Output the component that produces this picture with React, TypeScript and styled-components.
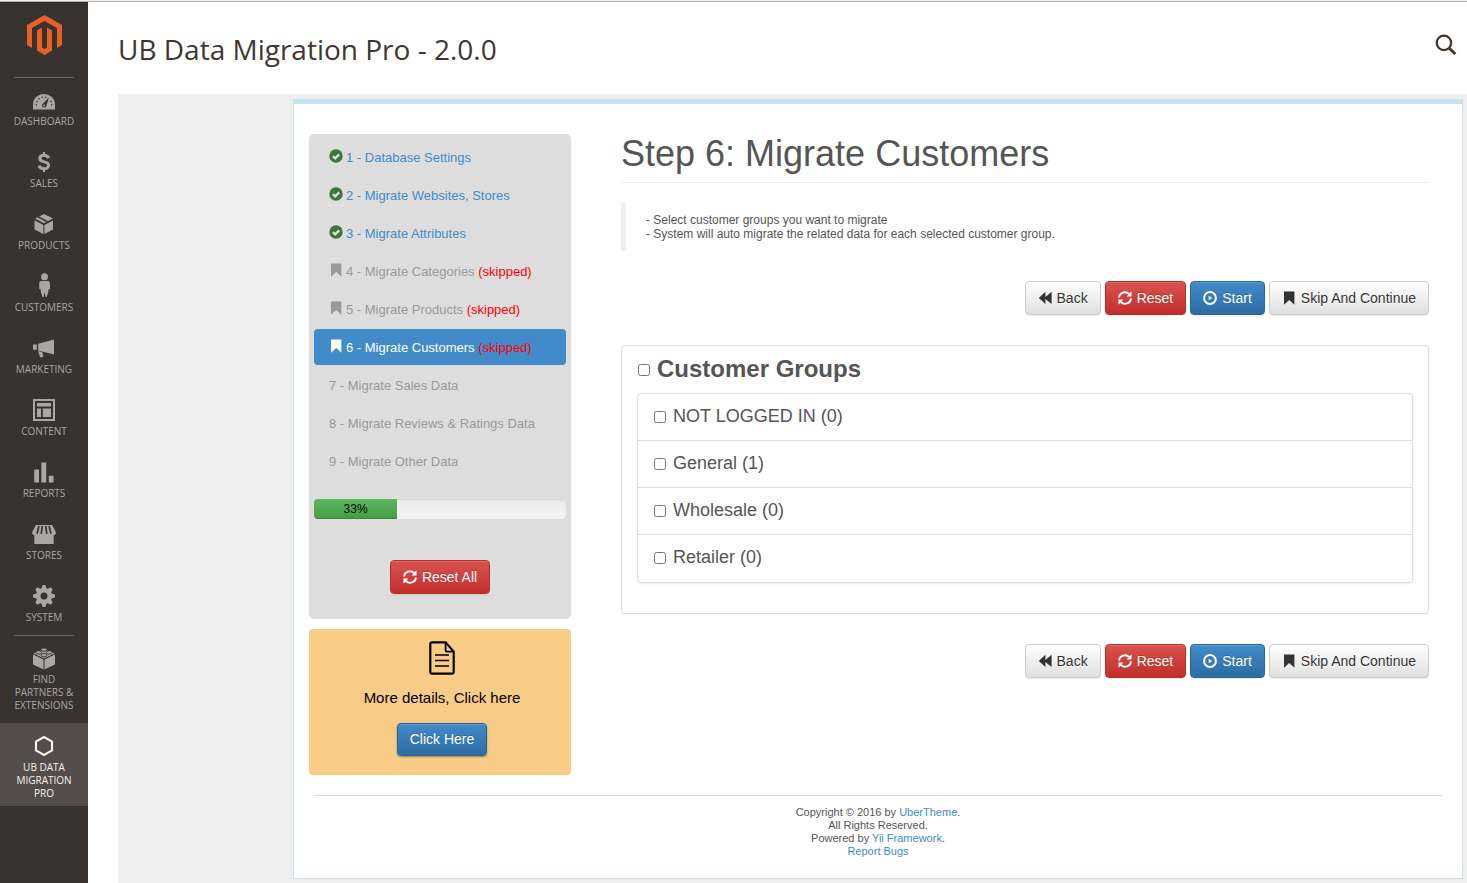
import React from "react";
import styled, { createGlobalStyle, css } from "styled-components";

const GlobalStyle = createGlobalStyle`
  *, *::before, *::after { box-sizing: border-box; }
  body {
    margin: 0;
    background: #fff;
    color: #555;
    font-family: "Liberation Sans", Arial, sans-serif;
    font-size: 14px;
    line-height: 20px;
  }
  h1, h2, h3, p, ul, ol { margin: 0; padding: 0; }
  ul, ol { list-style: none; }
  a { color: #428bca; text-decoration: none; }
  svg { display: block; flex: none; }
`;

/* ---------- Page shell ---------- */

const Page = styled.div`
  display: flex;
  flex-direction: column;
  min-height: 100vh;
`;

const TopEdge = styled.div`
  height: 2px;
  background: #f2f1ee;
  border-bottom: 1px solid #b3b2ab;
`;

const Shell = styled.div`
  display: flex;
  flex: 1;
`;

const SideNav = styled.nav`
  flex: none;
  width: 88px;
  background: #373330;
  font-family: "Open Sans", "Noto Sans", sans-serif;
`;

const LogoLink = styled.a`
  display: flex;
  justify-content: center;
  height: 75px;
  padding-top: 13px;
`;

const NavItem = styled.li<{ $divided?: boolean; $active?: boolean }>`
  display: flex;
  flex-direction: column;
  align-items: center;
  background: ${(p) => (p.$active ? "#524d49" : "transparent")};
  &::before {
    content: "";
    width: 60px;
    height: 1px;
    background: ${(p) => (p.$divided ? "#736963" : "transparent")};
  }
`;

const NavLink = styled.a<{ $active?: boolean }>`
  display: flex;
  flex-direction: column;
  align-items: center;
  gap: 4px;
  width: 100%;
  padding: 11px 10px ${(p) => (p.$active ? "6px" : "11px")};
  color: ${(p) => (p.$active ? "#f7f3eb" : "#aaa6a0")};
  font-size: 10px;
  line-height: 13px;
  text-align: center;
  text-transform: uppercase;
`;

const Main = styled.main`
  display: flex;
  flex: 1;
  flex-direction: column;
  min-width: 0;
  padding-left: 30px;
`;

const Header = styled.header`
  display: flex;
  align-items: center;
  justify-content: space-between;
  height: 92px;
  padding: 0 10px 0 0;
`;

const PageTitle = styled.h1`
  padding-top: 2px;
  color: #41362f;
  font-family: "Open Sans", "Noto Sans", sans-serif;
  font-size: 28px;
  font-weight: 400;
  line-height: 36px;
`;

const SearchButton = styled.button`
  padding: 0;
  margin-bottom: 6px;
  border: 0;
  background: none;
  color: #41362f;
`;

const Frame = styled.div`
  flex: 1;
  padding: 5px 4px 4px 175px;
  background: #eee;
`;

const Panel = styled.div`
  border: 1px solid #c9e0ed;
  border-top-width: 5px;
  background: #fff;
`;

const Columns = styled.div`
  display: flex;
  gap: 50px;
  padding: 30px 33px 20px 15px;
`;

/* ---------- Step list column ---------- */

const StepColumn = styled.aside`
  display: flex;
  flex: none;
  flex-direction: column;
  gap: 10px;
  width: 262px;
`;

const StepCard = styled.div`
  display: flex;
  flex-direction: column;
  align-items: center;
  padding: 5px 5px 25px;
  border-radius: 5px;
  background: #ddd;
`;

const StepList = styled.ol`
  display: flex;
  flex-direction: column;
  gap: 2px;
  width: 100%;
`;

type StepState = "done" | "skipped" | "active" | "todo";

const stepColor: Record<StepState, string> = {
  done: "#428bca",
  skipped: "#999",
  active: "#fff",
  todo: "#999",
};

const StepLink = styled.a<{ $state: StepState }>`
  display: flex;
  align-items: center;
  gap: 3px;
  height: 36px;
  padding: 2px 15px 0;
  border-radius: 4px;
  background: ${(p) => (p.$state === "active" ? "#428bca" : "transparent")};
  color: ${(p) => stepColor[p.$state]};
  font-size: 13px;
  white-space: pre;
  svg {
    margin-bottom: 4px;
    color: ${(p) => (p.$state === "done" ? "#3c763d" : "inherit")};
  }
`;

const Skipped = styled.span`
  color: #f00;
`;

const Progress = styled.div`
  width: 100%;
  height: 20px;
  margin: 20px 0 41px;
  overflow: hidden;
  border-radius: 4px;
  background: linear-gradient(#ebebeb, #f5f5f5);
  box-shadow: inset 0 1px 2px rgba(0, 0, 0, 0.1);
`;

const ProgressBar = styled.div`
  height: 100%;
  background: linear-gradient(#5cb85c, #449d44);
  box-shadow: inset 0 -1px 0 rgba(0, 0, 0, 0.15);
  color: #000;
  font-size: 12px;
  text-align: center;
`;

const HelpCard = styled.div`
  display: flex;
  flex-direction: column;
  align-items: center;
  padding: 12px 0 19px 4px;
  border-radius: 4px;
  background: #f8cb86;
  color: #000;
  font-size: 15px;
`;

const HelpText = styled.p`
  margin: 13px 0 15px;
`;

/* ---------- Buttons ---------- */

type Tone = "default" | "primary" | "danger";

const tones = {
  default: css`
    border-color: #ccc;
    background: linear-gradient(#fff, #e0e0e0);
    color: #333;
    text-shadow: 0 1px 0 #fff;
  `,
  primary: css`
    border-color: #2b669a;
    background: linear-gradient(#428bca, #2d6ca2);
    color: #fff;
    text-shadow: 0 -1px 0 rgba(0, 0, 0, 0.2);
  `,
  danger: css`
    border-color: #b92c28;
    background: linear-gradient(#d9534f, #c12e2a);
    color: #fff;
    text-shadow: 0 -1px 0 rgba(0, 0, 0, 0.2);
  `,
};

const Button = styled.button<{ $tone?: Tone }>`
  display: flex;
  align-items: center;
  gap: 5px;
  height: 34px;
  padding: 0 12px;
  border: 1px solid;
  border-radius: 4px;
  box-shadow: inset 0 1px 0 rgba(255, 255, 255, 0.15), 0 1px 1px rgba(0, 0, 0, 0.075);
  font-family: inherit;
  font-size: 14px;
  line-height: 20px;
  white-space: nowrap;
  ${(p) => tones[p.$tone ?? "default"]}
  svg { margin-bottom: 1px; }
`;

const HelpButton = styled(Button)`
  height: 33px;
  padding-bottom: 2px;
  box-shadow: inset 0 1px 0 rgba(255, 255, 255, 0.15), 0 1px 2px rgba(0, 0, 0, 0.4);
`;

const ButtonBar = styled.div`
  display: flex;
  justify-content: flex-end;
  gap: 4px;
  margin: 30px 0;
`;

/* ---------- Step content ---------- */

const Content = styled.section`
  flex: 1;
  min-width: 0;
`;

const StepTitle = styled.h2`
  padding-bottom: 9px;
  border-bottom: 1px solid #eee;
  font-size: 36px;
  font-weight: 400;
  line-height: 39px;
`;

const Notes = styled.div`
  margin-top: 20px;
  padding: 10px 20px;
  border-left: 5px solid #eee;
  font-size: 12px;
  line-height: 14px;
`;

const GroupPanel = styled.div`
  padding: 10px 15px 30px;
  border: 1px solid #ddd;
  border-radius: 4px;
  box-shadow: 0 1px 1px rgba(0, 0, 0, 0.05);
`;

const CheckLabel = styled.label`
  display: flex;
  align-items: center;
  gap: 7px;
  input {
    width: 12px;
    height: 12px;
    margin: 1px 0 0 1px;
  }
`;

const GroupHeading = styled.h3`
  margin-bottom: 11px;
  font-size: 24px;
  line-height: 26px;
`;

const GroupList = styled.ul`
  border: 1px solid #ddd;
  border-radius: 4px;
  box-shadow: 0 1px 2px rgba(0, 0, 0, 0.08);
`;

const GroupRow = styled.li`
  padding: 12px 15px 14px;
  font-size: 18px;
  line-height: 20px;
  & + & { border-top: 1px solid #ddd; }
  &:last-child { padding-bottom: 15px; }
`;

const Footer = styled.footer`
  margin: 0 20px;
  padding: 10px 0 20px;
  border-top: 1px solid #c9e0ed;
  font-size: 11px;
  line-height: 13px;
  text-align: center;
`;

/* ---------- Icons ---------- */

const CheckCircle = () => (
  <svg width="14" height="14" viewBox="0 0 14 14" aria-hidden="true">
    <circle cx="7" cy="7" r="6.7" fill="currentColor" />
    <path d="M3.9 7.1 6.2 9.3 10.2 5.4" fill="none" stroke="#ddd" strokeWidth="2.3" />
  </svg>
);

const Bookmark = () => (
  <svg width="14" height="14" viewBox="0 0 14 14" aria-hidden="true">
    <path d="M2 .5h10.4V13.8L7.2 8.9 2 13.8Z" fill="currentColor" />
  </svg>
);

const Refresh = () => (
  <svg width="14" height="14" viewBox="0 0 14 14" aria-hidden="true">
    <g fill="none" stroke="currentColor" strokeWidth="1.9">
      <path d="M1.1 6.6A5.8 5.6 0 0 1 11.2 3.1" />
      <path d="M12.9 7.4A5.8 5.6 0 0 1 2.8 10.9" />
    </g>
    <path d="M13.5.3V5.4H8.6ZM.5 13.7V8.6H5.4Z" fill="currentColor" />
  </svg>
);

const Play = () => (
  <svg width="14" height="14" viewBox="0 0 14 14" aria-hidden="true">
    <circle cx="7" cy="7" r="5.9" fill="none" stroke="currentColor" strokeWidth="2" />
    <path d="M5.6 4.7 9.4 7 5.6 9.3Z" fill="currentColor" />
  </svg>
);

const Backward = () => (
  <svg width="14" height="14" viewBox="0 0 14 14" aria-hidden="true">
    <path d="M7.4.8V5.9L13.6.8V13L7.4 7.9V13L.8 6.9Z" fill="currentColor" />
  </svg>
);

const Document = () => (
  <svg width="26" height="34" viewBox="0 0 26 34" fill="none" stroke="#000" aria-hidden="true">
    <path d="M3 1.3H16.6L24.7 10.6V31A1.7 1.7 0 0 1 23 32.7H3A1.7 1.7 0 0 1 1.3 31V3A1.7 1.7 0 0 1 3 1.3Z" strokeWidth="2.2" />
    <path d="M16.6 1.5V9.2Q16.6 10.6 18 10.6H24.5" strokeWidth="1.8" />
    <path d="M6 14H20M6 19.5H20M6 25H20" strokeWidth="1.6" />
  </svg>
);

const SearchIcon = () => (
  <svg width="22" height="22" viewBox="0 0 22 22" fill="none" stroke="currentColor" aria-hidden="true">
    <circle cx="8.9" cy="8.9" r="7.2" strokeWidth="2.2" />
    <path d="M14 14 20.4 20" strokeWidth="2.9" />
  </svg>
);

const Logo = () => (
  <svg width="35" height="41" viewBox="0 0 35 41" fill="#eb5e24" aria-hidden="true">
    <path d="M17.5 0 35 10V30L30 33V13L17.5 6 5 13V33L0 30V10Z" />
    <path d="M10 15.5 15 12.5V32.5L17.5 34 20 32.5V12.5L25 15.5V35.5L17.5 40 10 35.5Z" />
  </svg>
);

const bg = "#373330";

const navArt: Record<string, React.ReactNode> = {
  dashboard: (
    <>
      <path d="M0 20.5V15.5A11 10.5 0 0 1 22 15.5V20.5Z" />
      <g fill={bg}>
        <circle cx="3.3" cy="15.8" r=".8" />
        <circle cx="4" cy="12.5" r=".8" />
        <circle cx="6" cy="9.8" r=".8" />
        <circle cx="9.2" cy="8.2" r=".8" />
        <circle cx="12.6" cy="8.2" r=".8" />
        <circle cx="18" cy="12.5" r=".8" />
        <circle cx="18.7" cy="15.8" r=".8" />
        <path d="M15.8 8.6 13.4 17A2.2 2.2 0 1 1 9.6 14.9Z" />
      </g>
      <circle cx="11.3" cy="16.5" r=".9" />
    </>
  ),
  sales: (
    <g fill="none" stroke="currentColor" strokeWidth="3">
      <path d="M15.7 7.1C14.7 4.9 13 4.3 10.9 4.3 8.5 4.3 6.8 5.5 6.8 7.5 6.8 12.2 15.6 9.5 15.6 14.2 15.6 16.4 13.6 17.7 11.1 17.7 8.7 17.7 6.9 16.8 6 14.6" />
      <path d="M11 1V5M11 17V21" strokeWidth="2.2" />
    </g>
  ),
  products: (
    <>
      <path d="M11 1 20 5.6 11 10.2 2 5.6Z" />
      <path d="M1.5 7 10.4 11.5V21L1.5 16.5ZM20 7 11.4 11.5V21L20 16.5Z" />
      <path d="M5 3.8 14.6 8.9" stroke={bg} strokeWidth="1.6" />
      <path d="M2 7.2 11 11.7 20 7.2" fill="none" stroke={bg} strokeWidth=".9" />
    </>
  ),
  customers: (
    <>
      <circle cx="11.5" cy="1.8" r="3.5" />
      <path d="M8.2 6H14.8Q17 6 17 8.2V14.2H15.4V17L13.6 22H12.6L11.6 17.5 10.6 22H9.6L7.8 17V14.2H6.2V8.2Q6.2 6 8.2 6Z" />
    </>
  ),
  marketing: (
    <>
      <path d="M5.2 6.8 21 2.4V17.4L5.2 13.6ZM0 7.4H3.8V12.8H0Z" />
      <path d="M5 14 9.2 15 10.5 19.8 7.2 20.6Z" />
    </>
  ),
  content: (
    <>
      <path d="M1 1H21V21H1Z" fill="none" stroke="currentColor" strokeWidth="2" />
      <path d="M4 4H18V7.6H4ZM4 9.4H8V18H4ZM9.8 9.4H18V18H9.8Z" />
    </>
  ),
  reports: <path d="M1.2 8.6H6V21.5H1.2ZM8.4 1.5H13.2V21.5H8.4ZM15.8 14.8H20.6V21.5H15.8Z" />,
  stores: (
    <>
      <path d="M2.8 2H19.2L23 9.5Q23 12 20.7 12V21H1.3V12Q-1 12-1 9.5Z" />
      <path d="M6 3 4 10.8M9.3 3 8.2 10.8M12.7 3 13.8 10.8M16 3 18 10.8" stroke={bg} strokeWidth="1.7" />
    </>
  ),
  system: (
    <>
      <circle cx="11" cy="11" r="5.8" fill="none" stroke="currentColor" strokeWidth="4.6" />
      <path d="M9.6 0H12.4L13.6 4H8.4ZM9.6 22H12.4L13.6 18H8.4ZM0 9.6V12.4L4 13.6V8.4ZM22 9.6V12.4L18 13.6V8.4ZM2.3 4.5 4.5 2.3 8 4.2 4.2 8ZM19.7 4.5 17.5 2.3 14 4.2 17.8 8ZM2.3 17.5 4.5 19.7 8 17.8 4.2 14ZM19.7 17.5 17.5 19.7 14 17.8 17.8 14Z" />
    </>
  ),
  partners: (
    <>
      <path d="M11 2 21.6 6.5 11 11.5.4 6.5Z" />
      <path d="M0 7.6 10.5 12.5V22.5L0 17.5ZM22 7.6 11.5 12.5V22.5L22 17.5Z" />
      <g stroke={bg} strokeWidth=".9">
        <ellipse cx="11" cy="2.6" rx="3" ry="1.7" />
        <ellipse cx="5.6" cy="5.4" rx="3" ry="1.7" />
        <ellipse cx="16.4" cy="5.4" rx="3" ry="1.7" />
        <ellipse cx="11" cy="8.2" rx="3" ry="1.7" />
      </g>
    </>
  ),
  migration: (
    <path d="M11 2 19 6.5V15.5L11 20 3 15.5V6.5Z" fill="none" stroke="currentColor" strokeWidth="2.1" />
  ),
};

const NavIcon = ({ name }: { name: string }) => (
  <svg width="22" height="22" viewBox="0 0 22 22" fill="currentColor" overflow="visible" aria-hidden="true">
    {navArt[name]}
  </svg>
);

/* ---------- Data ---------- */

const navItems = [
  { icon: "dashboard", label: "Dashboard", divided: true },
  { icon: "sales", label: "Sales" },
  { icon: "products", label: "Products" },
  { icon: "customers", label: "Customers" },
  { icon: "marketing", label: "Marketing" },
  { icon: "content", label: "Content" },
  { icon: "reports", label: "Reports" },
  { icon: "stores", label: "Stores" },
  { icon: "system", label: "System" },
  { icon: "partners", label: "Find Partners & Extensions", divided: true },
  { icon: "migration", label: "UB Data Migration Pro", active: true },
];

const steps: { label: string; state: StepState; skipped?: boolean }[] = [
  { label: "1 - Database Settings", state: "done" },
  { label: "2 - Migrate Websites, Stores", state: "done" },
  { label: "3 - Migrate Attributes", state: "done" },
  { label: "4 - Migrate Categories", state: "skipped", skipped: true },
  { label: "5 - Migrate Products", state: "skipped", skipped: true },
  { label: "6 - Migrate Customers", state: "active", skipped: true },
  { label: "7 - Migrate Sales Data", state: "todo" },
  { label: "8 - Migrate Reviews & Ratings Data", state: "todo" },
  { label: "9 - Migrate Other Data", state: "todo" },
];

const groups = ["NOT LOGGED IN (0)", "General (1)", "Wholesale (0)", "Retailer (0)"];

const progress = 33;

const StepActions = () => (
  <ButtonBar>
    <Button type="button"><Backward />Back</Button>
    <Button type="button" $tone="danger"><Refresh />Reset</Button>
    <Button type="button" $tone="primary"><Play />Start</Button>
    <Button type="button"><Bookmark />Skip And Continue</Button>
  </ButtonBar>
);

export default function App() {
  return (
    <Page>
      <GlobalStyle />
      <TopEdge />
      <Shell>
        <SideNav aria-label="Main">
          <LogoLink href="#" aria-label="Magento"><Logo /></LogoLink>
          <ul>
            {navItems.map((item) => (
              <NavItem key={item.icon} $divided={item.divided} $active={item.active}>
                <NavLink href="#" $active={item.active}>
                  <NavIcon name={item.icon} />
                  <span>{item.label}</span>
                </NavLink>
              </NavItem>
            ))}
          </ul>
        </SideNav>
        <Main>
          <Header>
            <PageTitle>UB Data Migration Pro - 2.0.0</PageTitle>
            <SearchButton type="button" aria-label="Search"><SearchIcon /></SearchButton>
          </Header>
          <Frame>
            <Panel>
              <Columns>
                <StepColumn>
                  <StepCard>
                    <StepList>
                      {steps.map((step) => (
                        <li key={step.label}>
                          <StepLink href="#" $state={step.state}>
                            {step.state === "done" && <CheckCircle />}
                            {step.skipped && <Bookmark />}
                            <span>
                              {step.label}
                              {step.skipped && <Skipped> (skipped)</Skipped>}
                            </span>
                          </StepLink>
                        </li>
                      ))}
                    </StepList>
                    <Progress role="progressbar" aria-valuenow={progress} aria-valuemin={0} aria-valuemax={100}>
                      <ProgressBar style={{ width: `${progress}%` }}>{progress}%</ProgressBar>
                    </Progress>
                    <Button type="button" $tone="danger"><Refresh />Reset All</Button>
                  </StepCard>
                  <HelpCard>
                    <Document />
                    <HelpText>More details, Click here</HelpText>
                    <HelpButton type="button" $tone="primary">Click Here</HelpButton>
                  </HelpCard>
                </StepColumn>
                <Content>
                  <StepTitle>Step 6: Migrate Customers</StepTitle>
                  <Notes>
                    <p>- Select customer groups you want to migrate</p>
                    <p>- System will auto migrate the related data for each selected customer group.</p>
                  </Notes>
                  <StepActions />
                  <GroupPanel>
                    <GroupHeading>
                      <CheckLabel><input type="checkbox" />Customer Groups</CheckLabel>
                    </GroupHeading>
                    <GroupList>
                      {groups.map((group) => (
                        <GroupRow key={group}>
                          <CheckLabel><input type="checkbox" />{group}</CheckLabel>
                        </GroupRow>
                      ))}
                    </GroupList>
                  </GroupPanel>
                  <StepActions />
                </Content>
              </Columns>
              <Footer>
                <p>Copyright © 2016 by <a href="#">UberTheme</a>.</p>
                <p>All Rights Reserved.</p>
                <p>Powered by <a href="#">Yii Framework</a>.</p>
                <p><a href="#">Report Bugs</a></p>
              </Footer>
            </Panel>
          </Frame>
        </Main>
      </Shell>
    </Page>
  );
}
